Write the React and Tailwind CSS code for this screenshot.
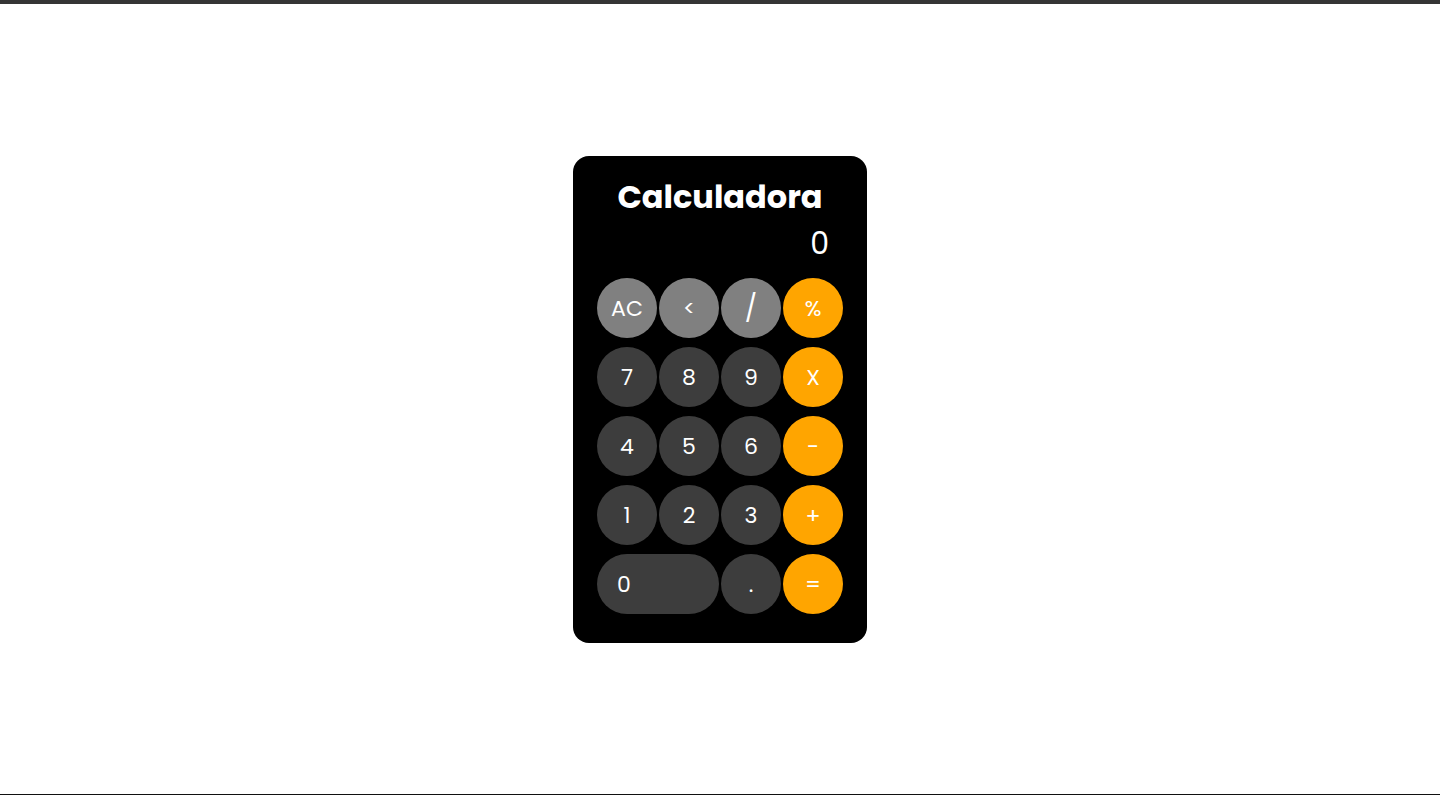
import React from "react";

const font = { fontFamily: '"Poppins", "Inter", "Noto Sans", sans-serif' };

const rows = [
  [
    { label: "AC", kind: "fn" },
    { label: "<", kind: "fn" },
    { label: "/", kind: "fn", big: true },
    { label: "%", kind: "op" },
  ],
  [
    { label: "7" },
    { label: "8" },
    { label: "9" },
    { label: "X", kind: "op" },
  ],
  [
    { label: "4" },
    { label: "5" },
    { label: "6" },
    { label: "-", kind: "op" },
  ],
  [
    { label: "1" },
    { label: "2" },
    { label: "3" },
    { label: "+", kind: "op" },
  ],
];

function Key({ label, kind, big }) {
  const color =
    kind === "fn" ? "bg-[#808080]" : kind === "op" ? "bg-[#ffa500]" : "bg-[#3d3d3d]";
  return (
    <button
      className={
        "w-[60px] h-[60px] rounded-full flex items-center justify-center pt-[2px] text-white " +
        color +
        (big ? " text-[26px]" : " text-[22px]")
      }
    >
      {label}
    </button>
  );
}

export default function App() {
  return (
    <div className="w-full h-[795px] bg-white flex flex-col" style={font}>
      <div className="h-[4px] bg-[#353535]" />
      <div className="flex-1 flex items-center justify-center">
        <div className="w-[294px] bg-black rounded-2xl px-6 pt-[18px] pb-[29px]">
          <h1 className="text-white text-[32px] font-bold text-center h-[45px] leading-[45px]">
            Calculadora
          </h1>
          <div className="text-white text-[30px] font-normal text-right h-[48px] leading-[50px] pr-[14px] mb-[11px]">
            0
          </div>
          <div className="flex flex-col gap-[9px]">
            {rows.map((row, i) => (
              <div key={i} className="flex gap-[2px]">
                {row.map((k) => (
                  <Key key={k.label} {...k} />
                ))}
              </div>
            ))}
            <div className="flex gap-[2px]">
              <button className="w-[122px] h-[60px] rounded-full bg-[#3d3d3d] text-white text-[22px] text-left pl-[20px] pt-[2px]">
                0
              </button>
              <Key label="." />
              <Key label="=" kind="op" />
            </div>
          </div>
        </div>
      </div>
      <div className="h-[1px] bg-[#111]" />
    </div>
  );
}
